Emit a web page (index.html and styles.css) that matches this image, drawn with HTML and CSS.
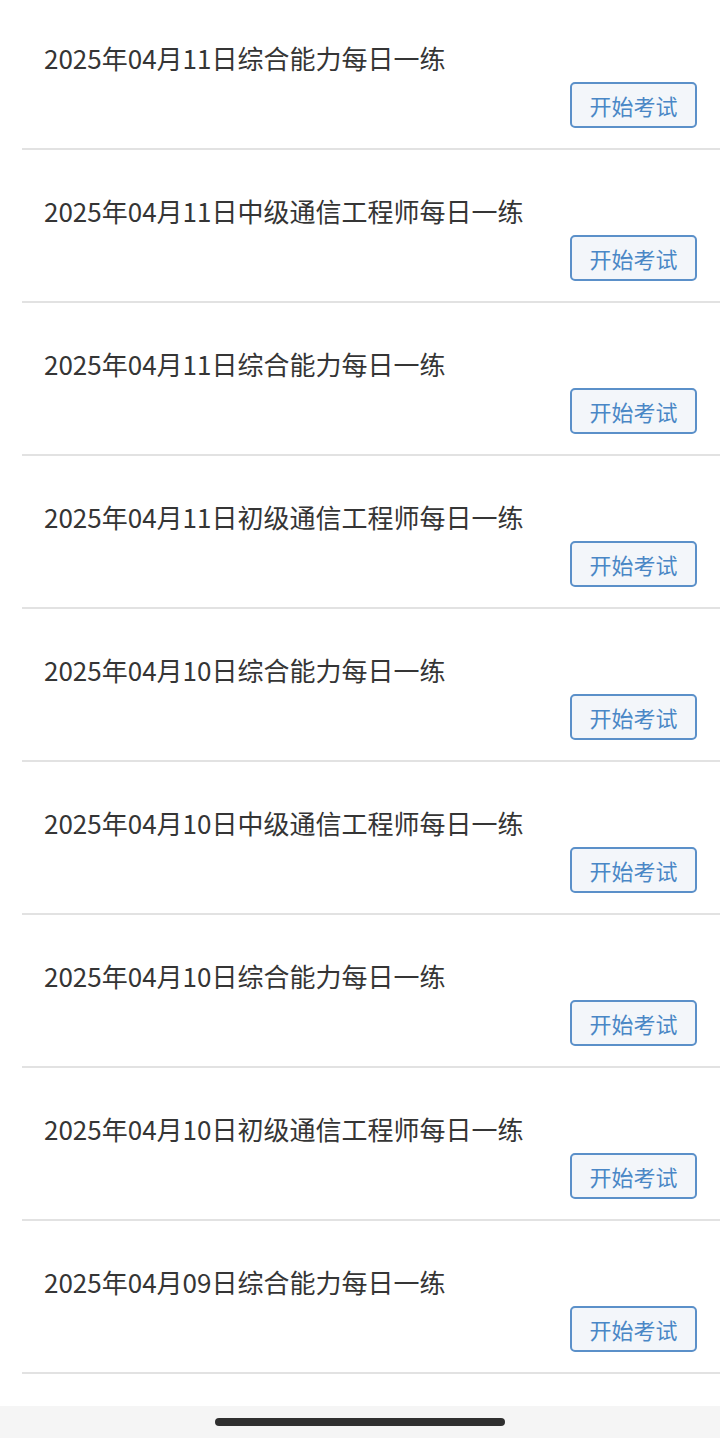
FILE: index.html
```html
<!DOCTYPE html>
<html lang="zh-CN">
<head>
  <meta charset="UTF-8">
  <title>每日一练</title>
  <meta name="viewport" content="width=device-width, initial-scale=1.0">
  <link rel="stylesheet" href="styles.css">
</head>
<body>
  <main>
    <ul class="exam-list">
      <li class="exam-item">
        <div class="exam-title">2025年04月11日综合能力每日一练</div>
        <button class="start-btn">开始考试</button>
      </li>
      <li class="exam-item">
        <div class="exam-title">2025年04月11日中级通信工程师每日一练</div>
        <button class="start-btn">开始考试</button>
      </li>
      <li class="exam-item">
        <div class="exam-title">2025年04月11日综合能力每日一练</div>
        <button class="start-btn">开始考试</button>
      </li>
      <li class="exam-item">
        <div class="exam-title">2025年04月11日初级通信工程师每日一练</div>
        <button class="start-btn">开始考试</button>
      </li>
      <li class="exam-item">
        <div class="exam-title">2025年04月10日综合能力每日一练</div>
        <button class="start-btn">开始考试</button>
      </li>
      <li class="exam-item">
        <div class="exam-title">2025年04月10日中级通信工程师每日一练</div>
        <button class="start-btn">开始考试</button>
      </li>
      <li class="exam-item">
        <div class="exam-title">2025年04月10日综合能力每日一练</div>
        <button class="start-btn">开始考试</button>
      </li>
      <li class="exam-item">
        <div class="exam-title">2025年04月10日初级通信工程师每日一练</div>
        <button class="start-btn">开始考试</button>
      </li>
      <li class="exam-item">
        <div class="exam-title">2025年04月09日综合能力每日一练</div>
        <button class="start-btn">开始考试</button>
      </li>
    </ul>
  </main>

  <footer class="home-bar">
    <div class="home-indicator"></div>
  </footer>
</body>
</html>
```

FILE: styles.css
```css
html, body {
  margin: 0;
  padding: 0;
  height: 100%;
}
body {
  display: flex;
  flex-direction: column;
  min-height: 100vh;
  font-family: "Noto Sans CJK SC", "Noto Sans", sans-serif;
  background: #fff;
  color: #333;
  overflow: hidden;
}
main {
  flex: 1;
}
.exam-list {
  list-style: none;
  margin: -3px 0 0 22px;
  padding: 0;
}
.exam-item {
  display: flex;
  flex-direction: column;
  padding: 43px 23px 20px 22px;
  border-bottom: 2px solid #e2e2e2;
}
.exam-title {
  font-size: 26px;
  line-height: 36px;
  color: #353535;
}
.start-btn {
  align-self: flex-end;
  margin-top: 6px;
  width: 127px;
  height: 46px;
  padding: 0;
  border: 2px solid #5b90c9;
  border-radius: 5px;
  background: #f3f6fa;
  color: #4a87c6;
  font-family: inherit;
  font-size: 22px;
  line-height: 42px;
}
.home-bar {
  height: 32px;
  background: #f5f5f5;
  display: flex;
  justify-content: center;
  align-items: center;
}
.home-indicator {
  width: 290px;
  height: 8px;
  border-radius: 4px;
  background: #2f2f2f;
}
```
